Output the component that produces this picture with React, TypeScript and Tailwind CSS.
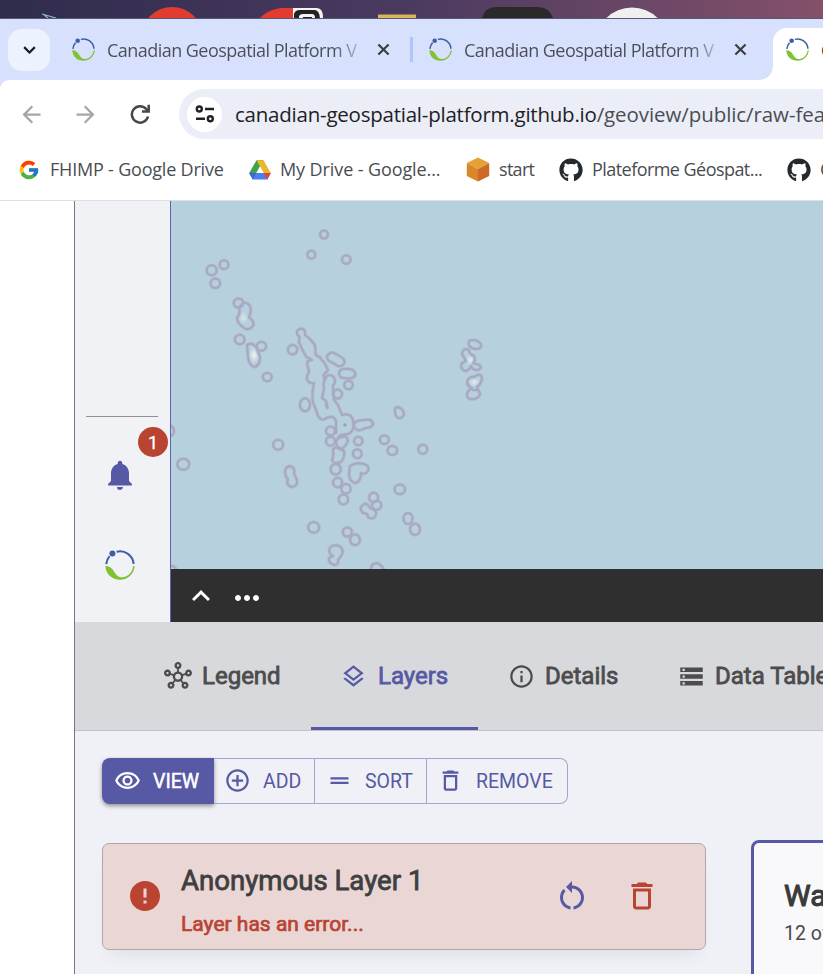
import React from "react";
import {
  MdOutlineHub, MdOutlineLayers, MdInfoOutline, MdStorage, MdOutlineRemoveRedEye,
  MdControlPoint, MdDragHandle, MdDeleteOutline, MdNotifications, MdError,
  MdRestartAlt, MdKeyboardArrowUp, MdMoreHoriz, MdArrowBack, MdArrowForward,
} from "react-icons/md";
import { FcGoogle } from "react-icons/fc";
import { FaGithub } from "react-icons/fa";

function GeoLogo({ className }: { className: string }) {
  return (
    <svg viewBox="0 0 30 30" className={className} fill="none">
      <path d="M1.2 14.2A14 14 0 0 1 4.6 6.2M11.6 1.8A13.6 13.6 0 0 1 28.6 14" stroke="#3c5fa5" strokeWidth="2" />
      <circle cx="7.4" cy="3.6" r="3" fill="#3c5fa5" />
      <path d="M.3 16C4 15.5 7 18 9 21.500C11.500 26 14 27.500 17 27.300C23 27 27.500 22.500 28.200 16H29.700C29 24 23 29.700 15 29.700C7 29.700 1 24.500.3 16Z" fill="#80c232" />
    </svg>
  );
}

function Wallpaper() {
  return (
    <div className="h-[19px] w-full shrink-0 overflow-hidden border-b border-[#565a70] bg-linear-to-r from-[#2f2c4c] via-[#4b3a60] to-[#85506a]">
      <svg viewBox="0 0 823 18" className="h-[18px] w-[823px]">
        <path d="M42 14L56 18M44 15L48 18" stroke="#8fb4c8" strokeWidth="1.200" />
        <circle cx="172" cy="38" r="31" fill="#e23b30" />
        <path d="M258 20C266 11 275 8 285 8H293V20Z" fill="#e23b30" />
        <path d="M293 8H317Q323 8 323 18H293Z" fill="#f4f2f2" />
        <path d="M294 20V14Q295 10 300 10H315Q320 11 320 20Z" fill="#222" />
        <path d="M299 18V16Q300 14 303 14H312Q315 14 315 18Z" fill="#f4f2f2" />
        <path d="M303 18V17H312V18Z" fill="#222" />
        <path d="M378 14.500H416V18H378Z" fill="#d9b65c" />
        <path d="M482 18Q485 7 496 7H538Q549 7 553 18Z" fill="#2a2a2b" />
        <circle cx="632" cy="44" r="36.500" fill="#efefef" />
      </svg>
    </div>
  );
}

function Tab({ title }: { title: string }) {
  return (
    <div className="flex h-full w-[326px] shrink-0 items-center">
      <GeoLogo className="mr-[12px] size-[23px] shrink-0" />
      <span className="w-[252px] shrink-0 bg-linear-to-r from-[#4a4d54] from-90% to-[#4a4d5440] bg-clip-text pt-[2px] text-[18px] tracking-[-0.54px] whitespace-nowrap text-transparent">
        {title}
      </span>
      <svg viewBox="0 0 14 14" className="ml-[18px] size-[13px] shrink-0 stroke-[#3b3c3f]" strokeWidth="2.300" fill="none">
        <path d="M1.500 1.500L12.500 12.500M12.500 1.500L1.500 12.500" />
      </svg>
    </div>
  );
}

function TabStrip() {
  return (
    <div className="flex h-[61px] w-full shrink-0 overflow-hidden bg-[#d7e1fd]">
      <div className="mt-[10px] ml-2 flex size-[42px] shrink-0 items-center justify-center rounded-[14px] bg-[#edf2ff]">
        <svg viewBox="0 0 14 9" className="h-[8px] w-[13px]" fill="none" stroke="#1d1e22" strokeWidth="2.500">
          <path d="M1 1.300L7 7.300L13 1.300" />
        </svg>
      </div>
      <div className="ml-[22px] flex h-[61px] shrink-0 items-center">
        <Tab title="Canadian Geospatial Platform V" />
        <div className="ml-[12px] mr-[16px] h-[25px] w-[3px] shrink-0 bg-[#aec4fb]" />
        <Tab title="Canadian Geospatial Platform V" />
      </div>
      <div className="ml-[2px] flex shrink-0 items-end">
        <svg viewBox="0 0 16 16" className="size-[16px]" fill="#fff">
          <path d="M16 0V16H0Q16 16 16 0Z" />
        </svg>
        <div className="flex h-[52px] w-[80px] items-center rounded-tl-[14px] bg-white pb-[9px] pl-[13px]">
          <GeoLogo className="size-[23px] shrink-0" />
          <span className="ml-[12px] pt-[2px] text-[18px] whitespace-nowrap text-[#1f1f1f]">C</span>
        </div>
      </div>
    </div>
  );
}

function Toolbar() {
  return (
    <div className="bg-[#d7e1fd]">
      <div className="flex h-[68px] w-full items-center overflow-hidden rounded-tl-[9px] bg-white">
        <MdArrowBack className="ml-[18px] size-[27px] shrink-0 text-[#a5a6a9]" />
        <MdArrowForward className="ml-[27px] size-[27px] shrink-0 text-[#a5a6a9]" />
        <svg viewBox="0 0 20 20" className="ml-[31px] size-[20px] shrink-0" fill="none" stroke="#47484b" strokeWidth="2.500">
          <path d="M18 12.500A8.200 8.200 0 1 1 16.500 5.300L18 7" />
          <path d="M18.700.8V7.500H12" />
        </svg>
        <div className="ml-[29px] flex h-[50px] w-[660px] shrink-0 items-center rounded-l-full bg-[#ebeef6] pl-2">
          <div className="flex size-[35px] shrink-0 items-center justify-center rounded-full bg-white">
            <svg viewBox="0 0 20 18" className="h-[18px] w-[20px]" fill="none" stroke="#202124" strokeWidth="2.400">
              <circle cx="4.300" cy="4" r="2.500" />
              <path d="M10 4H19M1 13.700H10" />
              <circle cx="15.300" cy="13.700" r="2.500" />
            </svg>
          </div>
          <span className="ml-[13px] pt-px text-[20.500px] tracking-[-0.230px] whitespace-nowrap text-[#1f2024]">
            canadian-geospatial-platform.github.io<span className="tracking-[-0.080px] text-[#4a4d54]">/geoview/public/raw-fea</span>
          </span>
        </div>
      </div>
    </div>
  );
}

function DriveIcon() {
  return (
    <svg viewBox="0 0 22 20" className="size-[22px]">
      <path d="M7.500.2H14.500L4 19.500L.2 13Z" fill="#44a14b" />
      <path d="M7.500.2H14.500L21.800 13H14.500Z" fill="#eab72b" />
      <path d="M.2 13H21.800L18.300 19.600H3.900Z" fill="#4b7ff0" />
      <path d="M14.500 13H21.800L18.300 19.600Z" fill="#de4937" />
      <path d="M.2 13H7.200L3.900 19.600Z" fill="#3c67d6" />
      <path d="M11 6.500L14.700 13H7.300Z" fill="#fff" />
    </svg>
  );
}

function CubeIcon() {
  return (
    <svg viewBox="0 0 24 25" className="h-[25px] w-[24px]">
      <path d="M12 .5L23.200 6L12 12L.8 6Z" fill="#e6a136" />
      <path d="M.8 6L12 12V24.500L.8 19Z" fill="#dc862b" />
      <path d="M23.200 6L12 12V24.500L23.200 19Z" fill="#cc6a27" />
    </svg>
  );
}

function Bookmark({ icon, label, box }: { icon: React.ReactNode; label: string; box: string }) {
  return (
    <div className={"flex shrink-0 items-center text-[18px] whitespace-nowrap text-[#4a4c51] " + box}>
      <span className="mr-[9px] flex shrink-0">{icon}</span>
      {label}
    </div>
  );
}

function Bookmarks() {
  return (
    <div className="flex h-[53px] w-full shrink-0 items-center overflow-hidden border-b border-[#dfe0e2] bg-white pb-[9px] pl-[18px]">
      <Bookmark icon={<FcGoogle className="mr-px size-[22px]" />} label="FHIMP - Google Drive" box="w-[231px] tracking-[-0.2px]" />
      <Bookmark icon={<DriveIcon />} label="My Drive - Google..." box="w-[217px] tracking-[-0.1px]" />
      <Bookmark icon={<CubeIcon />} label="start" box="w-[93px] tracking-[-0.7px]" />
      <Bookmark icon={<FaGithub className="size-[24px] text-[#24292f]" />} label="Plateforme Géospat..." box="w-[228px] tracking-[-0.55px]" />
      <Bookmark icon={<FaGithub className="size-[24px] text-[#24292f]" />} label="C" box="w-[150px]" />
    </div>
  );
}

/* Island contours, [cx, cy, rx, ry] in map space */
const islands: number[][] = [
  [211.700, 270.300, 5, 5], [224, 264.700, 4.400, 4.400], [215.300, 283.300, 4.800, 4.800],
  [324, 234.600, 4, 4], [311.300, 254.700, 4, 4], [346.300, 259.500, 4.300, 4.300],
  [238.500, 303, 4.700, 4.500], [239.700, 339.500, 4.800, 4.700], [261.400, 346.300, 4.700, 4.500],
  [267.300, 377, 4.400, 4.300], [292.600, 349.600, 4.700, 4.700], [348.500, 385, 4.300, 4.300],
  [337.500, 394, 4.500, 4.500], [305, 404.800, 5, 6.500], [278.200, 444.800, 5, 5],
  [183.300, 464.300, 6, 5.500], [170, 431, 4, 5], [172, 570, 4, 4],
  [330.500, 431, 4.500, 4.500], [330.500, 441.200, 4.500, 4.500], [358.300, 441, 4.200, 4.200],
  [384.400, 439.700, 4.500, 4.300], [392.300, 450.500, 4.800, 4.500], [422.800, 449.200, 4.500, 4.500],
  [357.300, 453.700, 4.300, 4.500], [335.700, 469.200, 5, 5.300], [337.600, 482.500, 4.500, 4.700],
  [346, 488.700, 4.700, 4.700], [343.400, 499.400, 4.700, 5], [399.800, 489.300, 5.300, 4.800],
  [373.700, 497.500, 4.500, 4.700], [376.700, 505.300, 4.600, 4.500], [313.700, 527.400, 5.500, 5.300],
  [347.300, 532, 4.500, 4.500], [355, 539.700, 5, 5.300], [408, 518.500, 4.500, 5.500],
  [415, 529.300, 5, 5.700],
];

/* Irregular contours */
const shores: string[] = [
  "M241 305Q246 300 250 306Q252 311 249 317Q255 322 253 326Q249 331 244 328Q237 323 237 318Q241 313 239 308Z",
  "M247 345Q253 341 257 349L260 357Q260 366 254 367Q249 365 248 357Z",
  "M336 434L336 421Q334 416 330 417Q327 417 325 419Q321 421 318 416L316 410L312.500 401L312.500 392L314 383Q309 384 306.700 379Q307 375 309 372L307 363Q308 360 312 360L306.500 357L302 349L299 342L299.500 337Q295 333 298 330Q302 327 305 331V335L309 338L315 345L315.700 355L320 357.300L325 364L328 370L323.500 375L324.500 379L323.500 385L324 389L322 398L326 401L327.500 408L325.500 404",
  "M325 380Q326 375 330 375Q335 376 335 382L333 386L334 400L338 405L342 415Q347 413 351 416L353 420L353.500 427Q352 433 348 434L341 435L338 437",
  "M329 354Q332 351 336 354L341 357Q347 361 343 365Q339 368 335 364Q327 361 327 357Q327 355 329 354Z",
  "M341 369.500Q347 368 353 370Q357 374 354 377Q351 379 347 378.500L341 377.500Q337 374 341 369.500Z",
  "M395 412Q394 407 398 407Q404 409 404 415Q400 421 396 416Z",
  "M354 424Q356 420 364 420Q372 418 373 424Q372 428 365 428Q358 433 354 427Z",
  "M336 443Q336 438 342 437Q347 435 348 441Q346 446 341 450L338 448Z",
  "M333 449Q338 445 344 451Q345 457 341 462Q334 465 332 460Q334 456 333 449Z",
  "M350 466Q356 462 364 464Q370 466 368 471Q365 475 361 473Q361 482 355 483Q349 481 349 474Z",
  "M285 472Q285 467 290 466Q296 468 294 474Q299 482 296 485Q291 490 287 483Q289 479 286 477Z",
  "M364 504Q368 503 370 508Q377 510 376 515Q373 521 368 517Q368 513 363 513Q358 508 364 504Z",
  "M331 555Q327 549 332 546Q341 543 343 552Q341 557 338 560Q339 565 334 565Q328 563 329 558L333 556Z",
  "M371 570Q371 563 377 563Q382 565 384 570",
  "M469 341Q476 338 481 344Q482 349 476 349Q467 348 469 341Z",
  "M462 354Q463 347 469 350Q469 354 474 356Q476 361 473 363Q481 365 481 367Q479 372 473 369L471 366Q468 373 463 370Q460 367 462 363L466 361Z",
  "M467 383Q468 376 474 377Q481 372 482 378Q482 383 477 387L480 394Q479 398 474 399Q467 400 467 395Q467 391 471 389Z",
  "M473 389Q468 387 467 383M472 390H477",
];

function MapView() {
  return (
    <svg viewBox="171 201 652 368" className="h-[368px] w-[652px] shrink-0 bg-[#b7d0dd]">
      <defs>
        <radialGradient id="shoal">
          <stop offset="0" stopColor="#f4f8f2" />
          <stop offset="1" stopColor="#d5e5eb" stopOpacity="0" />
        </radialGradient>
      </defs>
      <ellipse cx="254" cy="355" rx="5.500" ry="9" fill="url(#shoal)" />
      <ellipse cx="243.500" cy="318" rx="5" ry="7" fill="url(#shoal)" opacity=".6" />
      <ellipse cx="470.500" cy="360" rx="5" ry="6" fill="url(#shoal)" opacity=".8" />
      <ellipse cx="474.500" cy="382" rx="6" ry="5" fill="url(#shoal)" opacity=".8" />
      <g fill="none" strokeLinejoin="round">
        {[["#a9a5c0", 3.600, 0.4], ["#a39bb9", 2, 0.6]].map(([color, w, o], k) => (
          <g key={k} stroke={color as string} strokeWidth={w} opacity={o}>
            {islands.map(([cx, cy, rx, ry], i) => <ellipse key={i} cx={cx} cy={cy} rx={rx} ry={ry} />)}
            {shores.map((d, i) => <path key={i} d={d} />)}
          </g>
        ))}
      </g>
      <circle cx="345" cy="425" r="1.800" fill="#a39bb9" />
    </svg>
  );
}

function AppBar() {
  return (
    <div className="flex w-[96px] shrink-0 flex-col items-center border-r border-[#6062b4] bg-[#f0f2f6] pr-[5px]">
      <div className="mt-[215px] ml-[3px] h-px w-[72px] shrink-0 bg-[#8f9193]" />
      <div className="relative mt-[40px] flex shrink-0">
        <MdNotifications className="size-[36px] text-[#5759a4]" />
        <span className="absolute -top-[30px] left-[36px] flex size-[30px] items-center justify-center rounded-full bg-[#b94431] text-[18px] text-white [-webkit-text-stroke:0.3px_currentColor]">1</span>
      </div>
      <GeoLogo className="mt-[57px] size-[30px]" />
    </div>
  );
}

function FooterTab({ icon, label, active, box }: { icon: React.ReactNode; label: string; active?: boolean; box: string }) {
  return (
    <div className={"flex h-[108px] shrink-0 items-center border-b-[3px] pt-[3px] text-[24px] whitespace-nowrap [-webkit-text-stroke:0.8px_currentColor] " + box + (active ? " border-[#5759a4] text-[#5759a4]" : " border-transparent text-[#4c4c4d]")}>
      {icon}
      <span>{label}</span>
    </div>
  );
}

function ActionButton({ icon, label, box }: { icon: React.ReactNode; label: string; box: string }) {
  return (
    <button className={"flex h-[46px] shrink-0 items-center border border-[#a3a4d0] text-[19.500px] whitespace-nowrap text-[#5759a4] " + box}>
      {icon}
      <span className="pt-[2px]">{label}</span>
    </button>
  );
}

function LayersPanel() {
  return (
    <div className="flex h-[243px] w-full overflow-hidden bg-[#f0f1f6] pl-[27px]">
      <div className="w-[604px] shrink-0 pt-[27px]">
        <div className="flex">
          <button className="flex h-[46px] w-[112px] shrink-0 items-center rounded-l-[8px] bg-[#5759a4] pl-[12px] text-[19.500px] text-white shadow-[0_2px_4px_rgba(0,0,0,0.4)]">
            <MdOutlineRemoveRedEye className="mr-[12px] mb-[2px] size-[27px]" />
            <span className="pt-[2px] [-webkit-text-stroke:0.5px_currentColor]">VIEW</span>
          </button>
          <ActionButton icon={<MdControlPoint className="mr-[12px] mb-px size-[27px]" />} label="ADD" box="w-[101px] border-l-0 pl-[10px]" />
          <ActionButton icon={<MdDragHandle className="mr-[12px] mb-px size-[27px]" />} label="SORT" box="w-[112px] border-l-0 pl-[11px]" />
          <ActionButton icon={<MdDeleteOutline className="mr-[12px] mb-px size-[27px]" />} label="REMOVE" box="w-[141px] rounded-r-[8px] border-l-0 pl-[10px]" />
        </div>
        <div className="mt-[39px] flex h-[107px] items-center rounded-[7px] border border-[#ada5a7] bg-[#e9d6d5] pb-px pl-[24px] shadow-[0_12px_16px_-8px_rgba(0,0,0,0.08)]">
          <MdError className="size-[36px] shrink-0 text-[#b94431]" />
          <div className="ml-[18px] w-[373px] shrink-0 pt-[10px]">
            <div className="text-[27.600px] leading-[42px] text-[#3e3f40] [-webkit-text-stroke:0.8px_currentColor]">Anonymous Layer 1</div>
            <div className="mt-[4px] text-[21px] leading-[36px] text-[#b94431] [-webkit-text-stroke:0.7px_currentColor]">Layer has an error...</div>
          </div>
          <MdRestartAlt className="size-[36px] shrink-0 text-[#5759a4]" />
          <MdDeleteOutline className="ml-[34px] size-[36px] shrink-0 text-[#b94431]" />
        </div>
      </div>
      <div className="mt-[109px] ml-[45px] h-[160px] w-[400px] shrink-0 rounded-tl-[8px] border-[3px] border-[#5759a4] bg-[#f9f9fc] pt-[31px] pl-[30px] whitespace-nowrap">
        <div className="text-[30px] leading-[44px] text-[#3a3a3b] [-webkit-text-stroke:1.100px_currentColor]">Wa</div>
        <div className="mt-px text-[19.500px] leading-[30px] text-[#4a4a4b]">12 of</div>
      </div>
    </div>
  );
}

export default function App() {
  return (
    <div className="flex h-[974px] w-[823px] flex-col overflow-hidden bg-white font-['Open_Sans','Noto_Sans',sans-serif]">
      <Wallpaper />
      <TabStrip />
      <Toolbar />
      <Bookmarks />
      <div className="ml-[74px] flex h-[773px] w-[749px] flex-col overflow-hidden border-l border-[#777879] font-[Roboto,sans-serif]">
        <div className="flex h-[421px] shrink-0">
          <AppBar />
          <div className="flex flex-col">
            <MapView />
            <div className="flex h-[53px] items-center bg-[#2f2f2f] text-white">
              <MdKeyboardArrowUp className="ml-[12px] size-[36px]" />
              <MdMoreHoriz className="mt-[4px] ml-[10px] size-[36px]" />
            </div>
          </div>
        </div>
        <div className="flex h-[109px] shrink-0 border-b border-[#c3c4c9] bg-[#d8d9dc]">
          <FooterTab icon={<MdOutlineHub className="mr-[10px] size-[28px] stroke-none" />} label="Legend" box="w-[236px] pl-[89px]" />
          <FooterTab active icon={<MdOutlineLayers className="mr-[11px] size-[27px] stroke-none" />} label="Layers" box="w-[167px] pl-[29px]" />
          <FooterTab icon={<MdInfoOutline className="mr-[10px] size-[27px] stroke-none" />} label="Details" box="w-[170px] pl-[30px]" />
          <FooterTab icon={<MdStorage className="mr-[10px] size-[27px] stroke-none" />} label="Data Table" box="w-[200px] pl-[30px]" />
        </div>
        <LayersPanel />
      </div>
    </div>
  );
}
